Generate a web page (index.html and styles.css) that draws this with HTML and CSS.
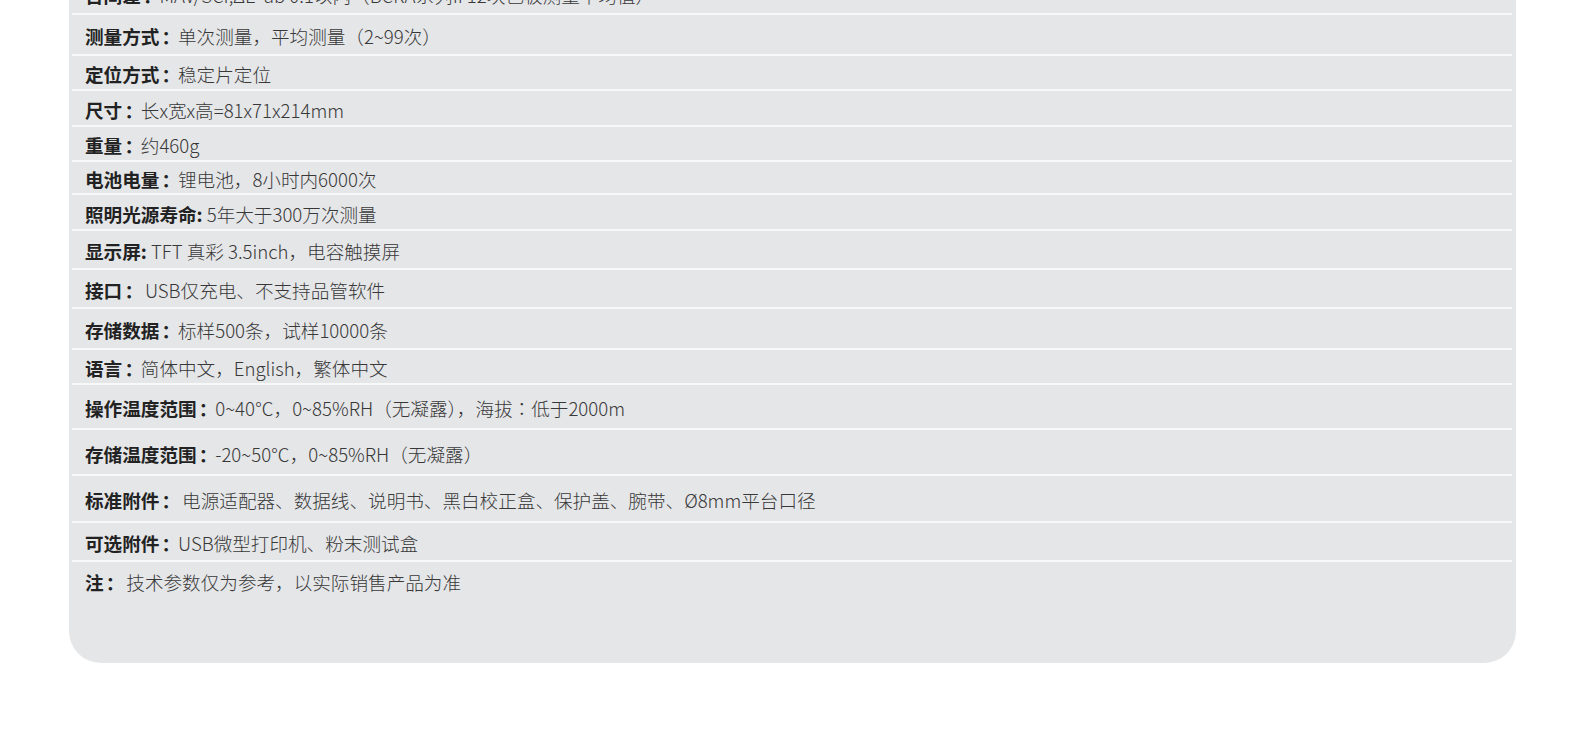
FILE: index.html
```html
<!doctype html>
<html lang="zh">
  <head>
    <meta charset="UTF-8" />
    <title>技术参数</title>
    <link rel="stylesheet" href="styles.css">
  </head>
  <body>
    <div class="specs">
      <div class="row h41"><b>台间差<i>：</i></b>MAV/SCI,ΔE*ab 0.1以内（BCRA系列II 12块色板测量平均值）</div>
      <div class="row h41"><b>测量方式<i>：</i></b>单次测量，平均测量（2~99次）</div>
      <div class="row h35"><b>定位方式<i>：</i></b>稳定片定位</div>
      <div class="row h36"><b>尺寸<i>：</i></b>长x宽x高=81x71x214mm</div>
      <div class="row h35"><b>重量<i>：</i></b>约460g</div>
      <div class="row h33"><b>电池电量<i>：</i></b>锂电池，8小时内6000次</div>
      <div class="row h36"><b>照明光源寿命:</b> 5年大于300万次测量</div>
      <div class="row h39"><b>显示屏:</b> TFT 真彩 3.5inch，电容触摸屏</div>
      <div class="row h39"><b>接口<i>：</i></b> USB仅充电、不支持品管软件</div>
      <div class="row h41"><b>存储数据<i>：</i></b>标样500条，试样10000条</div>
      <div class="row h35"><b>语言<i>：</i></b>简体中文，English，繁体中文</div>
      <div class="row h45"><b>操作温度范围<i>：</i></b>0~40℃，0~85%RH（无凝露），海拔<i>：</i>低于2000m</div>
      <div class="row h46"><b>存储温度范围<i>：</i></b>-20~50℃，0~85%RH（无凝露）</div>
      <div class="row h47"><b>标准附件<i>：</i></b> 电源适配器、数据线、说明书、黑白校正盒、保护盖、腕带、Ø8mm平台口径</div>
      <div class="row h39"><b>可选附件<i>：</i></b>USB微型打印机、粉末测试盒</div>
      <div class="row last"><b>注<i>：</i></b> 技术参数仅为参考，以实际销售产品为准</div>
    </div>
  </body>
</html>
```

FILE: styles.css
```css
body {
  margin: 0;
  background: #fff;
  font-family: "Noto Sans CJK SC", "Noto Sans", sans-serif;
  color: #383838;
}
.specs {
  width: 1447px;
  margin: -26px 0 0 69px;
  padding: 0 4px 0 3px;
  box-sizing: border-box;
  background: #e5e6e8;
  border-radius: 0 0 32px 32px;
}
.row {
  display: flex;
  align-items: center;
  box-sizing: border-box;
  padding: 2px 0 0 13px;
  border-bottom: 2px solid #f7f8f8;
  font-size: 18.6px;
  font-weight: 300;
  white-space: pre;
}
.row b {
  color: #222;
  font-weight: bold;
}
.row i {
  font-style: normal;
  font-family: "Noto Sans CJK TC", "Noto Sans CJK SC", sans-serif;
}
/* bold colon sits to the left, nudge it a little */
.row b i {
  padding-left: 0.12em;
  margin-right: -0.12em;
}
.h33 { height: 33px; }
.h35 { height: 35px; }
.h36 { height: 36px; }
.h39 { height: 39px; }
.h41 { height: 41px; }
.h45 { height: 45px; }
.h46 { height: 46px; }
.h47 { height: 47px; }
.row.last {
  align-items: flex-start;
  height: 101px;
  padding-top: 6px;
  border-bottom: none;
}
```
